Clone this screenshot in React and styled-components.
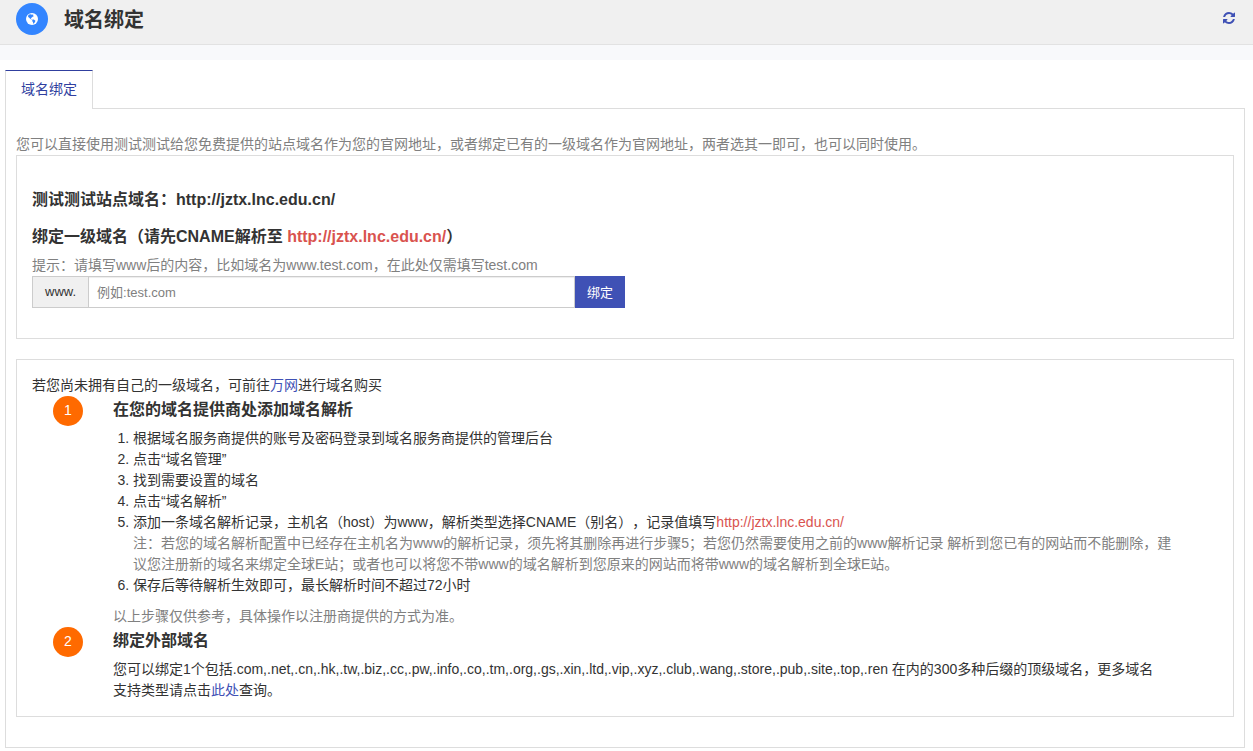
import React, { useState } from 'react';
import styled, { createGlobalStyle } from 'styled-components';

const SITE_URL = 'http://jztx.lnc.edu.cn/';

const GlobalStyle = createGlobalStyle`
  * {
    box-sizing: border-box;
  }

  body {
    margin: 0;
    background-color: #fff;
    color: #333;
    font-family: 'Liberation Sans', 'Noto Sans CJK SC', sans-serif;
    font-size: 14px;
    line-height: 21px;
    text-spacing-trim: space-all;
  }
`;

const Header = styled.header`
  display: flex;
  align-items: center;
  height: 45px;
  padding: 0 16px 6px;
  background-color: #f0f0f0;
  border-bottom: 1px solid #e2e2e2;
`;

const HeaderIcon = styled.span`
  display: flex;
  align-items: center;
  justify-content: center;
  width: 32px;
  height: 32px;
  margin-right: 16px;
  border-radius: 50%;
  background-color: #3385ff;
`;

const Title = styled.h1`
  flex: 1;
  margin: 0;
  padding-top: 2px;
  font-size: 20px;
  line-height: 28px;
`;

const RefreshButton = styled.button`
  display: flex;
  padding: 1px 2px 3px;
  border: none;
  background: none;
  color: #3f51b5;
  cursor: pointer;
`;

const Strip = styled.div`
  height: 15px;
  background-color: #f8f9fb;
`;

const Page = styled.main`
  padding: 10px 8px 3px 5px;
`;

const Tabs = styled.nav`
  display: flex;
`;

const Tab = styled.a`
  position: relative;
  margin-bottom: -1px;
  padding: 8px 15px 9px;
  border: 1px solid #ddd;
  border-top-color: #303f9f;
  border-bottom: none;
  background-color: #fff;
  color: #303f9f;
  text-decoration: none;
`;

const Panel = styled.section`
  padding: 25px 10px 30px;
  border: 1px solid #ddd;
`;

const Muted = styled.p`
  margin: 0;
  color: #808080;
`;

const Box = styled.div`
  display: flex;
  flex-direction: column;
  margin-bottom: ${props => props.$gap || '0'};
  padding: ${props => props.$padding || '15px'};
  border: 1px solid #ddd;
`;

const Heading = styled.h4`
  margin: ${props => props.$tight ? '5px 0 10px' : '10px 0'};
  font-size: 16px;
  line-height: 17px;
`;

const Danger = styled.span`
  color: #d9534f;
`;

const Link = styled.a`
  color: #3f51b5;
  text-decoration: none;
`;

const InputGroup = styled.form`
  display: flex;
  width: 50%;
  height: 32px;
`;

const Addon = styled.label`
  padding: 5px 12px;
  border: 1px solid #ccc;
  border-right: none;
  background-color: #f0f0f0;
  font-size: 13px;
  line-height: 20px;
`;

const Input = styled.input`
  flex: 1;
  min-width: 0;
  padding: 0 8px;
  border: 1px solid #ccc;
  border-radius: 0;
  box-shadow: inset 0 1px 1px rgba(0, 0, 0, 0.075);
  color: #555;
  font-family: inherit;
  font-size: 13px;
  outline: none;

  &::placeholder {
    color: #808080;
  }
`;

const BindButton = styled.button`
  padding: 0 12px 2px;
  border: none;
  background-color: #3f51b5;
  color: #fff;
  font-family: inherit;
  font-size: 13px;
  cursor: pointer;
`;

const Text = styled.p`
  margin: 0;
`;

const Step = styled.section`
  display: flex;
  gap: 30px;
  padding: 0 40px 0 21px;
`;

const StepNumber = styled.span`
  flex: none;
  width: 30px;
  height: 30px;
  border-radius: 50%;
  background-color: #ff6a00;
  color: #fff;
  line-height: 28px;
  text-align: center;
`;

const StepBody = styled.div`
  display: flex;
  flex: 1;
  flex-direction: column;
  min-width: 0;
`;

const List = styled.ol`
  margin: 0 0 10px;
  padding-left: 20px;
`;

const GlobeIcon = () => (
  <svg width="12" height="12" viewBox="0 0 12 12" aria-hidden="true">
    <circle cx="6" cy="6" r="6" fill="#fff" />
    <path d="M2 2.8 3.2 1.6 5 1.2 5.6 1.8 6.6 1.4 7.6 2 7 2.6 7.8 3.2 6.6 3.8 5.6 4.8 4.8 5 5 5.8 6 6.2 5.6 6.6 4.4 6 3.2 4.8 2.2 4z" fill="#3385ff" />
    <path d="M6.4 6.6 7.8 6.6 9.4 7.8 9 9 7.8 10.4 7 10.6 7 9.2 6.2 8z" fill="#3385ff" />
  </svg>
);

const RefreshIcon = () => (
  <svg width="12" height="12" viewBox="0 128 1536 1536" fill="currentColor" aria-hidden="true">
    <path d="M1511 1056q0 5-1 7-64 268-268 434.5t-478 166.5q-146 0-282.5-55t-243.5-157l-129 129q-19 19-45 19t-45-19-19-45v-448q0-26 19-45t45-19h448q26 0 45 19t19 45-19 45l-137 137q71 66 161 102t187 36q134 0 250-65t186-179q11-17 53-117 8-23 30-23h192q13 0 22.5 9.5t9.5 22.5zm25-800v448q0 26-19 45t-45 19h-448q-26 0-45-19t-19-45 19-45l138-138q-148-137-349-137-134 0-250 65t-186 179q-11 17-53 117-8 23-30 23h-199q-13 0-22.5-9.5t-9.5-22.5v-7q65-268 270-434.5t480-166.5q146 0 284 55.5t245 156.5l130-129q19-19 45-19t45 19 19 45z" />
  </svg>
);

const App = () => {
  const [domain, setDomain] = useState('');

  return (
    <>
      <GlobalStyle />
      <Header>
        <HeaderIcon><GlobeIcon /></HeaderIcon>
        <Title>域名绑定</Title>
        <RefreshButton type="button" aria-label="刷新"><RefreshIcon /></RefreshButton>
      </Header>
      <Strip />
      <Page>
        <Tabs>
          <Tab href="#domain">域名绑定</Tab>
        </Tabs>
        <Panel id="domain">
          <Muted>您可以直接使用测试测试给您免费提供的站点域名作为您的官网地址，或者绑定已有的一级域名作为官网地址，两者选其一即可，也可以同时使用。</Muted>
          <Box $padding="25px 15px 30px" $gap="20px">
            <Heading>测试测试站点域名：{SITE_URL}</Heading>
            <Heading>绑定一级域名（请先CNAME解析至 <Danger>{SITE_URL}</Danger>）</Heading>
            <Muted>提示：请填写www后的内容，比如域名为www.test.com，在此处仅需填写test.com</Muted>
            <InputGroup onSubmit={e => e.preventDefault()}>
              <Addon htmlFor="domain-name">www.</Addon>
              <Input id="domain-name" type="text" placeholder="例如:test.com" value={domain} onChange={e => setDomain(e.target.value)} />
              <BindButton type="submit">绑定</BindButton>
            </InputGroup>
          </Box>
          <Box>
            <Text>若您尚未拥有自己的一级域名，可前往<Link href="#buy">万网</Link>进行域名购买</Text>
            <Step>
              <StepNumber>1</StepNumber>
              <StepBody>
                <Heading $tight>在您的域名提供商处添加域名解析</Heading>
                <List>
                  <li>根据域名服务商提供的账号及密码登录到域名服务商提供的管理后台</li>
                  <li>点击“域名管理”</li>
                  <li>找到需要设置的域名</li>
                  <li>点击“域名解析”</li>
                  <li>
                    添加一条域名解析记录，主机名（host）为www，解析类型选择CNAME（别名），记录值填写<Danger>{SITE_URL}</Danger>
                    <Muted>注：若您的域名解析配置中已经存在主机名为www的解析记录，须先将其删除再进行步骤5；若您仍然需要使用之前的www解析记录 解析到您已有的网站而不能删除，建议您注册新的域名来绑定全球E站；或者也可以将您不带www的域名解析到您原来的网站而将带www的域名解析到全球E站。</Muted>
                  </li>
                  <li>保存后等待解析生效即可，最长解析时间不超过72小时</li>
                </List>
                <Muted>以上步骤仅供参考，具体操作以注册商提供的方式为准。</Muted>
              </StepBody>
            </Step>
            <Step>
              <StepNumber>2</StepNumber>
              <StepBody>
                <Heading $tight>绑定外部域名</Heading>
                <Text>
                  您可以绑定1个包括.com,.net,.cn,.hk,.tw,.biz,.cc,.pw,.info,.co,.tm,.org,.gs,.xin,.ltd,.vip,.xyz,.club,.wang,.store,.pub,.site,.top,.ren 在内的300多种后缀的顶级域名，更多域名<br />
                  支持类型请点击<Link href="#suffixes">此处</Link>查询。
                </Text>
              </StepBody>
            </Step>
          </Box>
        </Panel>
      </Page>
    </>
  );
};

export default App;
